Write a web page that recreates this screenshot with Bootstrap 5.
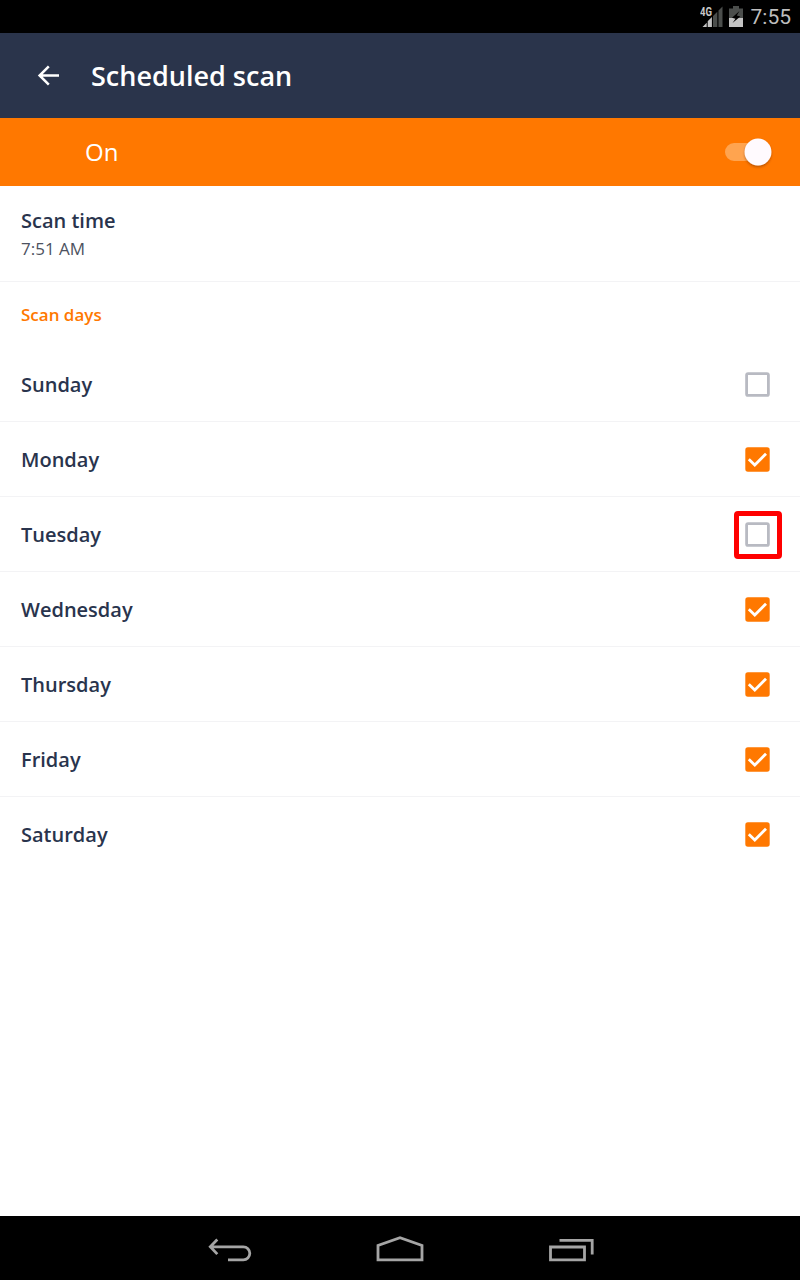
<!DOCTYPE html>
<html lang="en">
<head>
<meta charset="utf-8">
<meta name="viewport" content="width=device-width, initial-scale=1">
<title>Scheduled scan</title>
<link href="https://cdn.jsdelivr.net/npm/bootstrap@5.3.0/dist/css/bootstrap.min.css" rel="stylesheet">
<style>
body{font-family:"Open Sans","Noto Sans",sans-serif;color:#29344d;font-size:20px;line-height:27px}
.screen{height:1280px;overflow:hidden}
.status{height:33px;background:#000;color:#bebebe;font:21px/33px Roboto,sans-serif;padding-right:9px}
.status span{padding-top:2px}
.topbar{height:85px;background:#2a344b;padding-left:37px}
.topbar h1{font-size:27px;line-height:36px;font-weight:600;margin-left:31px}
.power{height:68px;background:#ff7800;padding:0 22px 0 85px;font-size:24px}
.power span{padding-bottom:2px}
.time-row{height:96px;padding:21px 21px 0;border-bottom:1px solid #f3f3f5}
.time-row small{font-size:17px;line-height:24px;color:#4d5260;margin-top:3px}
.section-title{height:65px;padding:21px 21px 0;font-size:17px;line-height:24px;font-weight:600;color:#ff7800}
.day{height:75px;padding:0 18px 0 21px;border-bottom:1px solid #f3f3f5}
.day:last-child{border-bottom-color:transparent}
.check-wrap{width:48px;height:48px;border:5px solid transparent;margin-top:2px}
.check-wrap.marked{border-color:#f00;border-radius:4px}
.sysnav{height:64px;background:#000}
</style>
</head>
<body class="bg-white">
<svg class="d-none">
  <symbol id="box-off" viewBox="0.5 0.5 26 26"><rect x="2.1" y="2.1" width="21.8" height="21.8" rx="1.5" fill="#fff" stroke="#b8bac2" stroke-width="2.8"/></symbol>
  <symbol id="box-on" viewBox="0.5 0.5 26 26"><rect x=".8" y=".8" width="24.4" height="24.4" rx="2.6" fill="#ff7800"/><path d="M4.3 12.800l6 5.800L21.500 7.300" fill="none" stroke="#fff" stroke-width="2.800"/></symbol>
</svg>
<div class="screen d-flex flex-column">
  <div class="status d-flex align-items-center justify-content-end flex-shrink-0">
    <svg width="24" height="24" viewBox="0 0 24 24" class="me-1">
      <path d="M18.500 22V5.500L22.500 1.500V22zM13 22V11l4.300-4.300V22z" fill="#4b4e4c"/><path d="M7.700 22v-5.700l4.200-4.200V22zM2.500 22l4.200-4.200V22z" fill="#c4c4c4"/>
      <text x="0" y="10.700" font-family="Roboto" font-size="12" font-weight="700" fill="#c8c8c8" textLength="12" lengthAdjust="spacingAndGlyphs">4G</text>
    </svg>
    <svg width="16" height="24" viewBox="0 0 16 24" style="margin-right:7px">
      <path d="M1 3.500h4V1h6v2.500h4V13H1z" fill="#4b4e4c"/><path d="M1 13h14v9H1z" fill="#c4c4c4"/><path d="M11.500 6L4 12.800l3.500 1L4.500 18l7.800-6.500-3.500-1z" fill="#000"/>
    </svg>
    <span>7:55</span>
  </div>
  <header class="topbar d-flex align-items-center text-white flex-shrink-0">
    <svg width="23" height="22" viewBox="0 0 23 22" fill="none" stroke="#fff" stroke-width="2.500"><path d="M11.800 1.300L2.600 10.500l9.200 9.200M2.600 10.500h19.400"/></svg>
    <h1 class="mb-0">Scheduled scan</h1>
  </header>
  <div class="power d-flex align-items-center justify-content-between text-white flex-shrink-0">
    <span>On</span>
    <svg width="54" height="36" viewBox="0 0 54 36">
      <defs><filter id="knob" x="-30%" y="-30%" width="160%" height="170%"><feDropShadow dx="0" dy="1.500" stdDeviation="1.300" flood-color="#602000" flood-opacity=".45"/></filter></defs>
      <rect x="1" y="9" width="42" height="18" rx="9" fill="#ffa44f"/><circle cx="34" cy="18" r="13.400" fill="#fffafe" filter="url(#knob)"/>
    </svg>
  </div>
  <main class="flex-grow-1">
    <div class="time-row d-flex flex-column"><span class="fw-semibold">Scan time</span><small>7:51 AM</small></div>
    <div class="section-title">Scan days</div>
    <div>
      <div class="day d-flex align-items-center justify-content-between"><span class="fw-semibold">Sunday</span><span class="check-wrap d-flex align-items-center justify-content-center"><svg width="26" height="26"><use href="#box-off"/></svg></span></div>
      <div class="day d-flex align-items-center justify-content-between"><span class="fw-semibold">Monday</span><span class="check-wrap d-flex align-items-center justify-content-center"><svg width="26" height="26"><use href="#box-on"/></svg></span></div>
      <div class="day d-flex align-items-center justify-content-between"><span class="fw-semibold">Tuesday</span><span class="check-wrap marked d-flex align-items-center justify-content-center"><svg width="26" height="26"><use href="#box-off"/></svg></span></div>
      <div class="day d-flex align-items-center justify-content-between"><span class="fw-semibold">Wednesday</span><span class="check-wrap d-flex align-items-center justify-content-center"><svg width="26" height="26"><use href="#box-on"/></svg></span></div>
      <div class="day d-flex align-items-center justify-content-between"><span class="fw-semibold">Thursday</span><span class="check-wrap d-flex align-items-center justify-content-center"><svg width="26" height="26"><use href="#box-on"/></svg></span></div>
      <div class="day d-flex align-items-center justify-content-between"><span class="fw-semibold">Friday</span><span class="check-wrap d-flex align-items-center justify-content-center"><svg width="26" height="26"><use href="#box-on"/></svg></span></div>
      <div class="day d-flex align-items-center justify-content-between"><span class="fw-semibold">Saturday</span><span class="check-wrap d-flex align-items-center justify-content-center"><svg width="26" height="26"><use href="#box-on"/></svg></span></div>
    </div>
  </main>
  <nav class="sysnav d-flex justify-content-center flex-shrink-0">
    <svg width="171" height="64" viewBox="144 1216 171 64" fill="none" stroke="#a5a5a5" stroke-width="2.800"><path d="M217.300 1239.500l-7 7.300 7 7.300M210 1246.800h33.300a6.500 6.500 0 0 1 0 13H228"/></svg>
    <svg width="171" height="64" viewBox="315 1216 171 64" fill="none" stroke="#a5a5a5" stroke-width="2.800"><path d="M378 1259.800v-14.300l22-7.700 22 7.700v14.300z"/></svg>
    <svg width="171" height="64" viewBox="486 1216 171 64" fill="none" stroke="#a5a5a5" stroke-width="2.800"><path d="M550.500 1247h34v12.800h-34zM559.500 1240.300h32.700v14.200"/></svg>
  </nav>
</div>
<script src="https://cdn.jsdelivr.net/npm/bootstrap@5.3.0/dist/js/bootstrap.bundle.min.js"></script>
</body>
</html>
